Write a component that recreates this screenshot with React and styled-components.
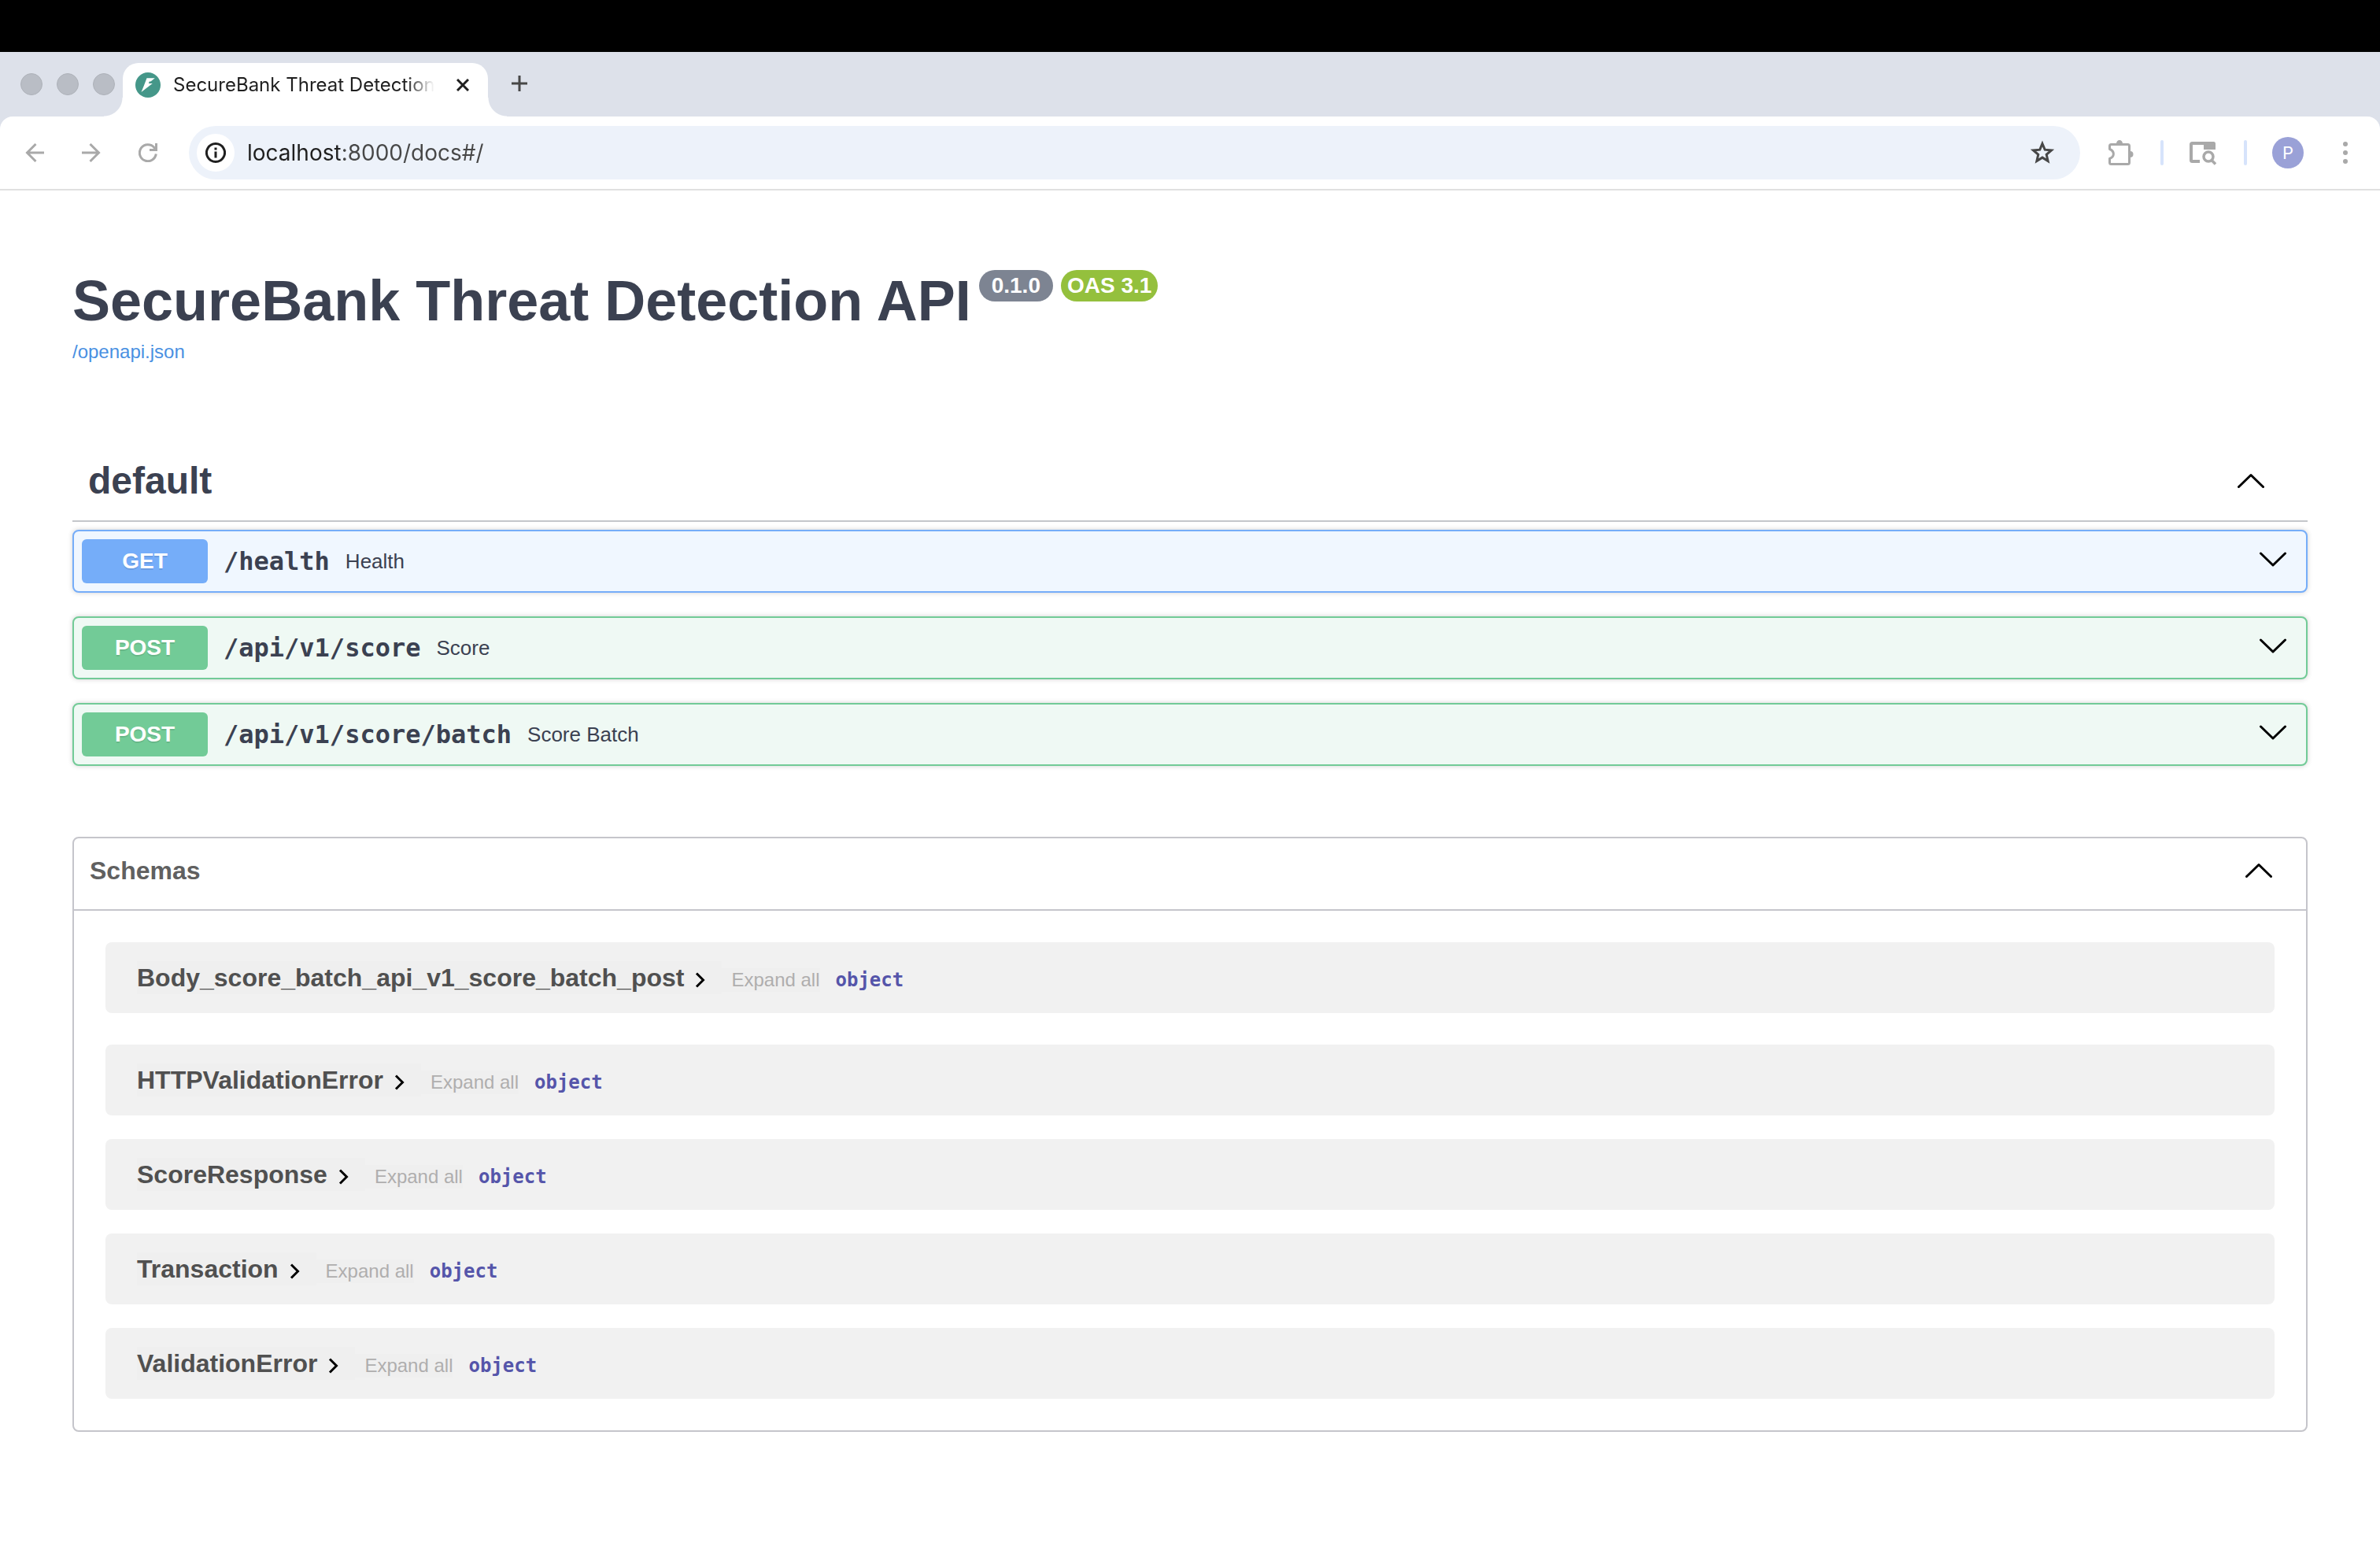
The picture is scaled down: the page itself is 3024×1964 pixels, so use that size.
import React from "react";
import styled, { createGlobalStyle } from "styled-components";

const sans = `"Liberation Sans", Helvetica, Arial, sans-serif`;
const mono = `"DejaVu Sans Mono", Menlo, monospace`;
const chrome = `Inter, "SF Pro Text", Roboto, sans-serif`;

const Global = createGlobalStyle`
  *, *::before, *::after { box-sizing: border-box; }
  html { background: #fff; }
  body { margin: 0; background: #fff; font-family: ${sans}; color: #3b4151; }
  h1, h2, h3, p, ul { margin: 0; padding: 0; }
  ul { list-style: none; }
  button { border: 0; margin: 0; padding: 0; background: none; font: inherit; color: inherit; cursor: pointer; }
  svg { display: block; flex: none; }
`;

/* ---------- browser frame ---------- */

const MenuStrip = styled.div`
  height: 66px;
  background: #000;
`;

const TabStrip = styled.div`
  display: flex;
  align-items: flex-end;
  height: 82px;
  background: #dde1ea;
`;

const WindowButtons = styled.div`
  display: flex;
  gap: 18px;
  width: 156px;
  padding: 0 0 27px 26px;
`;

const WindowButton = styled.button`
  width: 28px;
  height: 28px;
  flex: none;
  border-radius: 50%;
  border: 1px solid #aeb2b9;
  background: #b9bdc5;
`;

const Tab = styled.div`
  position: relative;
  display: flex;
  align-items: center;
  width: 464px;
  height: 68px;
  padding: 0 24px 12px 16px;
  border-radius: 20px 20px 0 0;
  background: #fff;

  &::before,
  &::after {
    content: "";
    position: absolute;
    bottom: 0;
    width: 24px;
    height: 24px;
  }
  &::before {
    right: 100%;
    background: radial-gradient(circle at 0 0, transparent 23px, #fff 24px);
  }
  &::after {
    left: 100%;
    background: radial-gradient(circle at 100% 0, transparent 23px, #fff 24px);
  }
`;

const TabTitle = styled.span`
  flex: 1;
  min-width: 0;
  margin: 0 28px 0 16px;
  white-space: nowrap;
  font: 400 24px/32px ${chrome};
  color: #1f1f1f;
  mask-image: linear-gradient(90deg, #000 calc(100% - 36px), transparent);
`;

const NewTab = styled.button`
  margin: 0 0 32px 30px;
  color: #474747;
`;

const ToolbarBack = styled.div`
  background: #dde1ea;
`;

const Toolbar = styled.div`
  display: flex;
  align-items: center;
  height: 94px;
  padding: 0 33px 0 32px;
  border-bottom: 2px solid #e0e0e0;
  border-radius: 16px 16px 0 0;
  background: #fff;
`;

const NavButtons = styled.div`
  display: flex;
  gap: 48px;
  margin-right: 40px;
  color: #a9a9a9;
`;

const AddressBar = styled.div`
  display: flex;
  flex: 1;
  align-items: center;
  height: 68px;
  padding: 0 32px 0 10px;
  border-radius: 34px;
  background: #edf2fa;
  color: #474747;
`;

const SiteInfo = styled.button`
  display: grid;
  place-items: center;
  width: 48px;
  height: 48px;
  border-radius: 50%;
  background: #fff;
  color: #1f1f1f;
`;

const Address = styled.input`
  flex: 1;
  min-width: 0;
  margin: 0 16px;
  padding: 0;
  border: 0;
  outline: 0;
  font: 400 28px/40px ${chrome};
  color: transparent;
  background: linear-gradient(90deg, #1f1f1f 118px, #474747 118px);
  background-clip: text;
`;

const Tools = styled.div`
  display: flex;
  align-items: center;
  margin-left: 36px;
  color: #a9a9a9;
`;

const Divider = styled.span`
  width: 4px;
  height: 32px;
  margin: 0 32px 0 34px;
  border-radius: 2px;
  background: #d6e3fb;
`;

const Avatar = styled.button`
  width: 40px;
  height: 40px;
  margin-right: 42px;
  border-radius: 50%;
  background: #9aa1d7;
  font: 400 22px/40px ${chrome};
  color: #fff;
`;

/* ---------- documentation page ---------- */

const Page = styled.main`
  padding: 98px 92px 144px;
`;

const TitleRow = styled.div`
  display: flex;
  align-items: flex-start;
  gap: 10px;
`;

const Title = styled.h1`
  font: 700 72px/84px ${sans};
`;

const Badge = styled.span`
  height: 40px;
  margin-top: 3px;
  padding: 0 ${(p) => p.$pad}px;
  border-radius: 20px;
  background: ${(p) => p.$bg};
  font: 700 28px/40px ${sans};
  color: #fff;
`;

const SpecLink = styled.a`
  display: block;
  width: max-content;
  margin-top: 9px;
  font: 400 24px/28px ${sans};
  color: #4990e2;
  text-decoration: none;
`;

const TagHeader = styled.div`
  display: flex;
  align-items: center;
  justify-content: space-between;
  height: 108px;
  margin-top: 94px;
  padding: 6px 55px 0 20px;
  border-bottom: 2px solid #c4c6cb;
`;

const TagName = styled.h2`
  font: 700 48px/56px ${sans};
`;

const Operations = styled.ul`
  display: flex;
  flex-direction: column;
  gap: 30px;
  margin-top: 10px;
`;

const tones = {
  GET: { solid: "#75adf9", soft: "#f0f7ff" },
  POST: { solid: "#72cb97", soft: "#eff9f4" },
};

const OperationRow = styled.li`
  border: 2px solid ${(p) => tones[p.$method].solid};
  border-radius: 8px;
  background: ${(p) => tones[p.$method].soft};
  box-shadow: 0 0 6px rgba(0, 0, 0, 0.19);
`;

const OperationButton = styled.button`
  display: flex;
  align-items: center;
  width: 100%;
  padding: 10px 25px 10px 10px;
  text-align: left;
`;

const Method = styled.span`
  width: 160px;
  border-radius: 6px;
  background: ${(p) => tones[p.$method].solid};
  font: 700 28px/56px ${sans};
  text-align: center;
  text-shadow: 0 2px 0 rgba(0, 0, 0, 0.1);
  color: #fff;
`;

const Path = styled.span`
  margin: 0 20px;
  font: 700 32px/40px ${mono};
`;

const Summary = styled.span`
  flex: 1;
  font: 400 26px/32px ${sans};
`;

const Schemas = styled.section`
  margin-top: 90px;
  border: 2px solid #c5c5cb;
  border-radius: 8px;
`;

const SchemasHeader = styled.div`
  display: flex;
  align-items: center;
  justify-content: space-between;
  height: 92px;
  padding: 0 43px 8px 20px;
  border-bottom: 2px solid #c5c5cb;
`;

const SchemasTitle = styled.h2`
  font: 700 32px/36px ${sans};
  color: #606060;
`;

const SchemaList = styled.ul`
  display: flex;
  flex-direction: column;
  gap: 30px;
  padding: 40px;
`;

const SchemaCard = styled.li`
  display: flex;
  align-items: flex-start;
  height: 90px;
  padding: 24px 40px;
  border-radius: 8px;
  background: #f1f1f1;

  &:first-child {
    margin-bottom: 10px;
  }
`;

const SchemaName = styled.button`
  display: flex;
  align-items: center;
  gap: 14px;
  padding-right: 20px;
  background: #efefef;
  font: 700 32px/42px ${sans};
  color: #505050;

  svg {
    margin-top: 6px;
    color: #000;
  }
`;

const ExpandAll = styled.button`
  margin: 9px 20px 0 0;
  padding-left: 12px;
  background: #efefef;
  font: 400 24px/30px ${sans};
  color: #afaeae;
`;

const TypeName = styled.strong`
  margin-top: 9px;
  font: 700 24px/30px ${mono};
  color: #5555aa;
`;

/* ---------- icons ---------- */

const Stroke = ({ w, h, d, width = 3, ...rest }) => (
  <svg width={w} height={h} viewBox={`0 0 ${w} ${h}`} fill="none" stroke="currentColor" strokeWidth={width} aria-hidden="true" {...rest}>
    <path d={d} />
  </svg>
);

const Chevron = ({ up }) => (
  <Stroke w={34} h={up ? 20 : 24} width={3} strokeLinecap="round" strokeLinejoin="round" stroke="#000"
    d={up ? "M1.5 17.5L17 2.5L32.5 17.5" : "M1.5 2L17 17L32.5 2"} />
);

const Favicon = () => (
  <svg width="32" height="32" viewBox="0 0 32 32" aria-hidden="true">
    <circle cx="16" cy="16" r="16" fill="#459789" />
    <path fill="#fff" d="M14.500 7.300H24.800L19.500 11.600H17.800L16.800 14H21.800L7.500 24.900L10.800 17Z" />
  </svg>
);

const Puzzle = () => (
  <svg width="32" height="32" viewBox="0 0 32 32" fill="none" aria-hidden="true">
    <path stroke="currentColor" strokeWidth="3" strokeLinejoin="round"
      d="M3.5 5.5H24.5Q26.5 5.5 26.5 7.5V28.5Q26.5 30.5 24.5 30.5H3.5Q1.500 30.5 1.500 28.5V23.500C8 21 8 14 1.500 11.500V7.500Q1.500 5.500 3.500 5.500Z" />
    <path fill="currentColor" d="M10 4.500a4 4.500 0 0 1 8 0zM27.500 14a4 4 0 0 1 0 8z" />
  </svg>
);

const TabSearch = () => (
  <svg width="36" height="32" viewBox="0 0 36 32" fill="none" stroke="currentColor" strokeWidth="4" aria-hidden="true">
    <path d="M14 27H4.500Q3 27 3 25.500V5.500Q3 4 4.500 4H31" />
    <path fill="currentColor" stroke="none" d="M19 2H31.500Q34 2 34 4.500V12H19Z" />
    <circle cx="25" cy="21" r="6" strokeWidth="3.500" />
    <path strokeWidth="3.500" d="M29 25.500L34 30.500" />
  </svg>
);

/* ---------- content ---------- */

const operations = [
  { method: "GET", path: "/health", summary: "Health" },
  { method: "POST", path: "/api/v1/score", summary: "Score" },
  { method: "POST", path: "/api/v1/score/batch", summary: "Score Batch" },
];

const schemas = [
  "Body_score_batch_api_v1_score_batch_post",
  "HTTPValidationError",
  "ScoreResponse",
  "Transaction",
  "ValidationError",
];

function BrowserFrame() {
  return (
    <header>
      <MenuStrip />
      <TabStrip>
        <WindowButtons>
          <WindowButton aria-label="Close window" />
          <WindowButton aria-label="Minimize window" />
          <WindowButton aria-label="Zoom window" />
        </WindowButtons>
        <Tab>
          <Favicon />
          <TabTitle>SecureBank Threat Detection</TabTitle>
          <button aria-label="Close tab">
            <Stroke w={16} h={16} width={3} d="M1 1L15 15M15 1L1 15" stroke="#1f1f1f" />
          </button>
        </Tab>
        <NewTab aria-label="New tab">
          <Stroke w={20} h={20} width={3} d="M10 0V20M0 10H20" />
        </NewTab>
      </TabStrip>
      <ToolbarBack>
        <Toolbar>
          <NavButtons>
            <button aria-label="Back">
              <Stroke w={24} h={24} width={3} d="M13.500 1L2.500 12L13.500 23M2 12H24" />
            </button>
            <button aria-label="Forward">
              <Stroke w={24} h={24} width={3} d="M10.500 1L21.500 12L10.500 23M22 12H0" />
            </button>
            <button aria-label="Reload">
              <Stroke w={24} h={24} width={3} d="M22.300 13.500A10.500 10.500 0 1 1 20 5.500L22 8M22.500 0V8.500H14" />
            </button>
          </NavButtons>
          <AddressBar>
            <SiteInfo aria-label="Site information">
              <Stroke w={26} h={26} width={3} d="M13 1.500A11.500 11.500 0 1 1 12.990 1.500ZM13 11.500V19.500M13 6.500V9.500" />
            </SiteInfo>
            <Address aria-label="Address" defaultValue="localhost:8000/docs#/" />
            <button aria-label="Bookmark this page">
              <Stroke w={32} h={32} width={3}
                d="M16 4.500L19.200 12.200L27.500 12.900L21.200 18.300L23.100 26.500L16 22.100L8.900 26.500L10.800 18.300L4.500 12.900L12.800 12.200Z" />
            </button>
          </AddressBar>
          <Tools>
            <button aria-label="Extensions"><Puzzle /></button>
            <Divider />
            <button aria-label="Search tabs"><TabSearch /></button>
            <Divider />
            <Avatar aria-label="Profile">P</Avatar>
            <button aria-label="Menu">
              <svg width="22" height="28" viewBox="0 0 22 28" fill="currentColor" aria-hidden="true">
                <circle cx="11" cy="3" r="3" />
                <circle cx="11" cy="14" r="3" />
                <circle cx="11" cy="25" r="3" />
              </svg>
            </button>
          </Tools>
        </Toolbar>
      </ToolbarBack>
    </header>
  );
}

export default function App() {
  return (
    <>
      <Global />
      <BrowserFrame />
      <Page>
        <TitleRow>
          <Title>SecureBank Threat Detection API</Title>
          <Badge $bg="#7d8492" $pad={16}>0.1.0</Badge>
          <Badge $bg="#94c03d" $pad={8}>OAS 3.1</Badge>
        </TitleRow>
        <SpecLink href="#openapi">/openapi.json</SpecLink>

        <TagHeader>
          <TagName>default</TagName>
          <button aria-label="Collapse default"><Chevron up /></button>
        </TagHeader>
        <Operations>
          {operations.map((op) => (
            <OperationRow key={op.path} $method={op.method}>
              <OperationButton>
                <Method $method={op.method}>{op.method}</Method>
                <Path>{op.path}</Path>
                <Summary>{op.summary}</Summary>
                <Chevron />
              </OperationButton>
            </OperationRow>
          ))}
        </Operations>

        <Schemas>
          <SchemasHeader>
            <SchemasTitle>Schemas</SchemasTitle>
            <button aria-label="Collapse schemas"><Chevron up /></button>
          </SchemasHeader>
          <SchemaList>
            {schemas.map((name) => (
              <SchemaCard key={name}>
                <SchemaName>
                  {name}
                  <Stroke w={14} h={20} width={3} d="M2 1.500L10.500 10L2 18.500" />
                </SchemaName>
                <ExpandAll>Expand all</ExpandAll>
                <TypeName>object</TypeName>
              </SchemaCard>
            ))}
          </SchemaList>
        </Schemas>
      </Page>
    </>
  );
}
